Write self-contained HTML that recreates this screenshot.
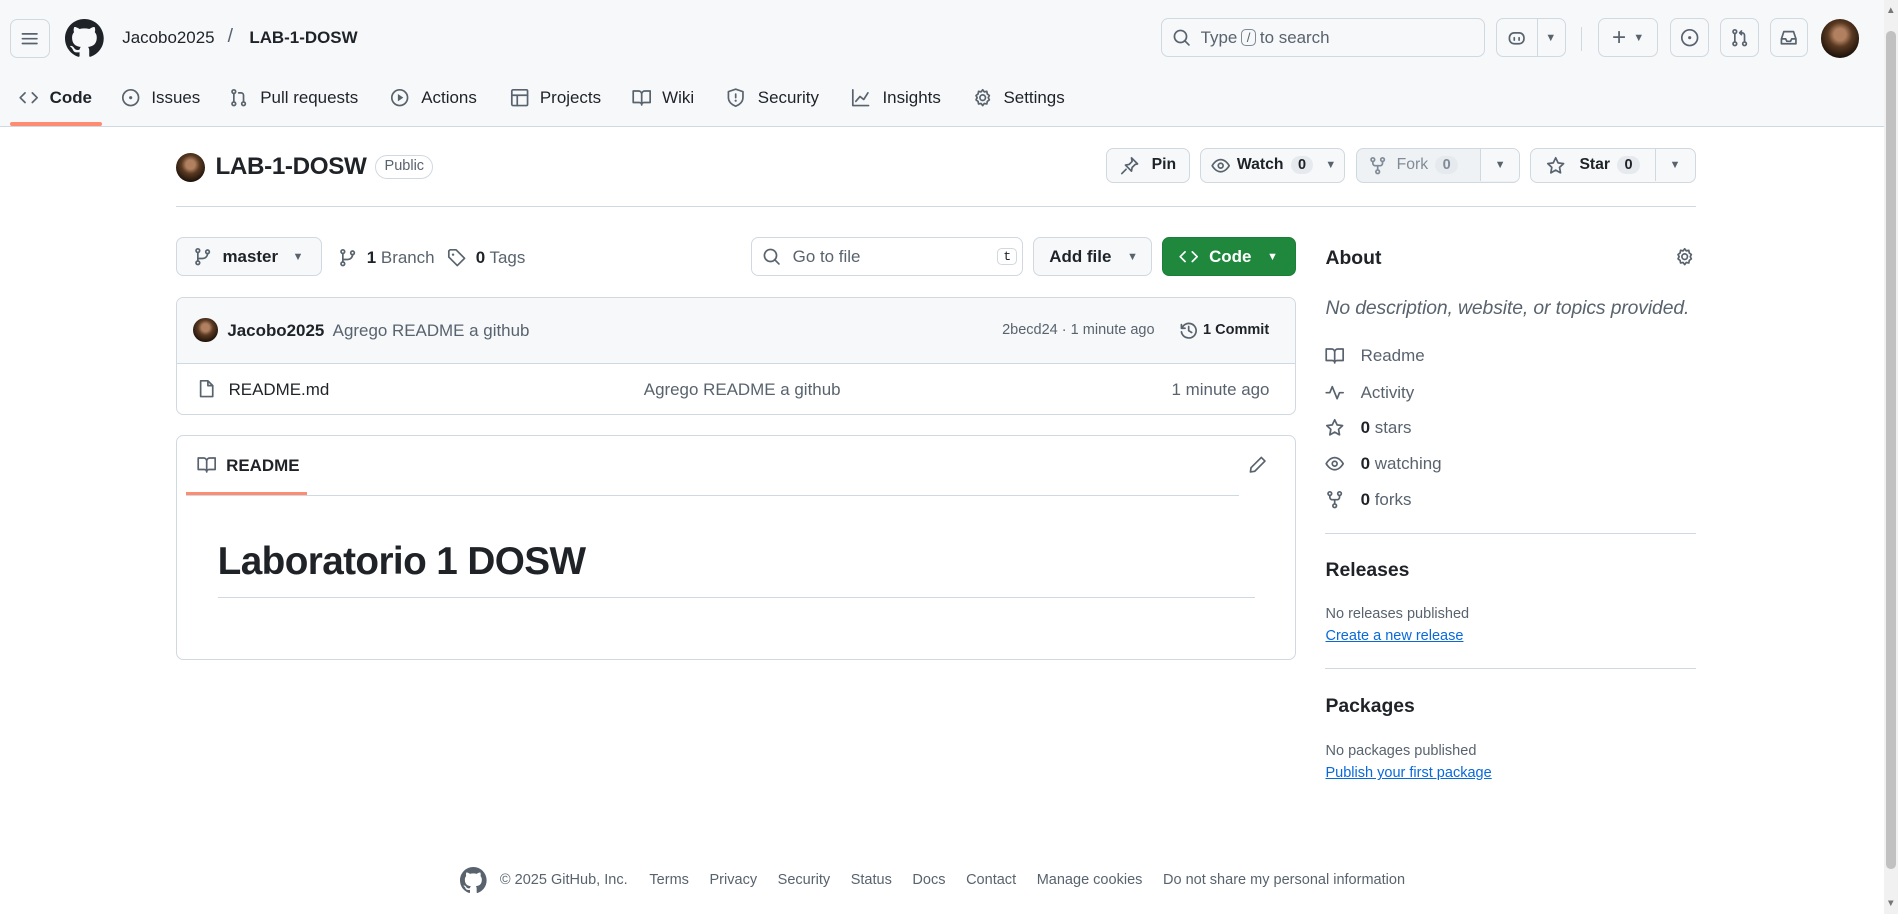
<!DOCTYPE html>
<html><head><meta charset="utf-8"><style>
*{box-sizing:border-box;margin:0;padding:0}
html,body{width:1898px;height:914px;overflow:hidden;background:#fff}
#w{zoom:1.2105;width:1568px;height:755px;position:relative;font-family:"Liberation Sans",sans-serif;color:#1f2328;font-size:14px}
.a{position:absolute}
.btn{position:absolute;border:1px solid #d1d9e0;border-radius:6px;background:#f6f8fa;display:flex;align-items:center;font-size:13px;font-weight:bold}
svg{display:block}
.ic{fill:none;stroke:#59636e;stroke-width:1.4;stroke-linecap:round;stroke-linejoin:round}
.cnt{background:#e6eaef;border-radius:10px;padding:1px 6px;font-size:12px;margin-left:6px}
.nav span{position:absolute;top:73px;font-size:14px}
.t{white-space:nowrap}
a{color:#0969da;text-decoration:underline}
</style></head><body><div id="w">
<!-- header -->
<div class="a" style="left:0;top:0;width:1556px;height:105px;background:#f6f8fa;border-bottom:1px solid #d1d9e0"></div>
<div class="btn" style="left:8px;top:16px;width:33px;height:32px;justify-content:center;background:#f6f8fa"><svg width="16" height="16"><path class="ic" d="M2 4h12M2 8h12M2 12h12"/></svg></div>
<svg class="a" style="left:54px;top:16px" width="32" height="32" viewBox="0 0 16 16"><path fill="#1f2328" d="M8 0C3.58 0 0 3.58 0 8c0 3.54 2.29 6.53 5.47 7.590.4.07.55-.17.55-.38 0-.19-.01-.82-.01-1.49-2.01.37-2.53-.49-2.69-.94-.09-.23-.48-.94-.82-1.13-.28-.15-.68-.52-.01-.53.63-.01 1.08.58 1.23.82.72 1.21 1.87.87 2.33.66.07-.52.28-.87.51-1.07-1.78-.2-3.64-.89-3.64-3.95 0-.87.31-1.59.82-2.15-.08-.2-.36-1.02.08-2.12 0 0 .67-.21 2.2.82.64-.18 1.32-.27 2-.27.68 0 1.36.09 2 .27 1.53-1.04 2.2-.82 2.2-.82.44 1.1.16 1.92.08 2.12.51.56.82 1.27.82 2.15 0 3.07-1.87 3.75-3.65 3.95.29.25.54.73.54 1.48 0 1.07-.01 1.93-.01 2.2 0 .21.15.46.55.38A8.013 8.013 0 0016 8c0-4.42-3.58-8-8-8z"/></svg>
<div class="a t" style="left:101px;top:23px">Jacobo2025</div>
<div class="a" style="left:188px;top:21px;color:#59636e;font-size:16px">/</div>
<div class="a t" style="left:206px;top:23px;font-weight:bold">LAB-1-DOSW</div>
<div class="a" style="left:959px;top:15px;width:268px;height:32px;border:1px solid #d1d9e0;border-radius:6px;display:flex;align-items:center;padding-left:8px;color:#59636e">
<svg width="16" height="16"><circle class="ic" cx="7" cy="7" r="5"/><path class="ic" d="M10.5 10.5L14 14"/></svg>
<span style="margin-left:8px">Type</span><span style="border:1px solid #818b98;border-radius:4px;font-size:11px;padding:0 4px;margin:0 3px">/</span><span>to search</span></div>
<div class="btn" style="left:1236px;top:15px;width:58px;height:32px;background:transparent"><svg style="margin-left:8px" width="16" height="16"><rect class="ic" x="2" y="4" width="12" height="9" rx="4"/><path class="ic" d="M6 8v2M10 8v2"/></svg><div style="border-left:1px solid #d1d9e0;height:30px;margin-left:9px"></div><span style="margin-left:6px;color:#59636e;font-size:9px">▼</span></div>
<div class="a" style="left:1306px;top:22px;width:1px;height:20px;background:#d1d9e0"></div>
<div class="btn" style="left:1320px;top:15px;width:50px;height:32px;background:transparent;justify-content:center;color:#59636e"><span style="font-size:20px;font-weight:normal">+</span><span style="font-size:9px;margin-left:6px">▼</span></div>
<div class="btn" style="left:1380px;top:15px;width:32px;height:32px;background:transparent;justify-content:center"><svg width="16" height="16"><circle class="ic" cx="8" cy="8" r="6.5"/><circle cx="8" cy="8" r="1.3" fill="#59636e"/></svg></div>
<div class="btn" style="left:1421px;top:15px;width:32px;height:32px;background:transparent;justify-content:center"><svg width="16" height="16"><circle class="ic" cx="4" cy="3" r="1.5"/><circle class="ic" cx="4" cy="13" r="1.5"/><circle class="ic" cx="12" cy="13" r="1.5"/><path class="ic" d="M4 4.5v7M12 11.5V6a2 2 0 00-2-2H8M9.5 2.5L8 4l1.5 1.5"/></svg></div>
<div class="btn" style="left:1462px;top:15px;width:32px;height:32px;background:transparent;justify-content:center"><svg width="16" height="16"><path class="ic" d="M2 9l2-6h8l2 6v4H2zM2 9h3.5l1 2h3l1-2H14"/></svg></div>
<div class="a" style="left:1504px;top:16px;width:32px;height:32px;border-radius:50%;background:radial-gradient(circle at 50% 40%,#b08060 0 20%,#5a3a22 40%,#1e120a 75%)"></div>
<!-- nav -->
<div class="nav">
<svg class="a" style="left:16px;top:73px" width="16" height="16"><path class="ic" d="M5 4L1 8l4 4M11 4l4 4-4 4"/></svg><span style="left:41px;font-weight:bold">Code</span>
<svg class="a" style="left:100px;top:73px" width="16" height="16"><circle class="ic" cx="8" cy="8" r="6.5"/><circle cx="8" cy="8" r="1.3" fill="#59636e"/></svg><span style="left:125px">Issues</span>
<svg class="a" style="left:189px;top:73px" width="16" height="16"><circle class="ic" cx="4" cy="3" r="1.5"/><circle class="ic" cx="4" cy="13" r="1.5"/><circle class="ic" cx="12" cy="13" r="1.5"/><path class="ic" d="M4 4.5v7M12 11.5V6a2 2 0 00-2-2H8"/></svg><span style="left:215px">Pull requests</span>
<svg class="a" style="left:322px;top:73px" width="16" height="16"><circle class="ic" cx="8" cy="8" r="6.5"/><path fill="#59636e" d="M6.5 5v6l4.5-3z"/></svg><span style="left:348px">Actions</span>
<svg class="a" style="left:421px;top:73px" width="16" height="16"><rect class="ic" x="1.5" y="1.5" width="13" height="13" rx="1"/><path class="ic" d="M1.5 6h13M6 6v8.5"/></svg><span style="left:446px">Projects</span>
<svg class="a" style="left:522px;top:73px" width="16" height="16"><path class="ic" d="M1 2.5h4.5A2.5 2.5 0 018 5v9a2 2 0 00-2-2H1zM15 2.5h-4.5A2.5 2.5 0 008 5v9a2 2 0 012-2h5z"/></svg><span style="left:547px">Wiki</span>
<svg class="a" style="left:600px;top:73px" width="16" height="16"><path class="ic" d="M8 1l6 2v5c0 3.5-3 6-6 7-3-1-6-3.5-6-7V3z M8 5v3"/><circle cx="8" cy="10.5" r=".9" fill="#59636e"/></svg><span style="left:626px">Security</span>
<svg class="a" style="left:703px;top:73px" width="16" height="16"><path class="ic" d="M1.5 1.5v13h13M4 11l3.5-4 3 2.5L14 4"/></svg><span style="left:729px">Insights</span>
<svg class="a" style="left:804px;top:73px" width="16" height="16"><circle class="ic" cx="8" cy="8" r="2.3"/><path class="ic" d="M8 1.5l1.3 1.7 2.1-.4.4 2.1 1.7 1.3L12.6 8l.9 1.8-1.7 1.3-.4 2.1-2.1-.4L8 14.5l-1.3-1.7-2.1.4-.4-2.1-1.7-1.3L3.4 8l-.9-1.8 1.7-1.3.4-2.1 2.1.4z"/></svg><span style="left:829px">Settings</span>
</div>
<div class="a" style="left:8px;top:101px;width:76px;height:3px;background:#fd8c73;border-radius:2px"></div>
<!-- title -->
<div class="a" style="left:145px;top:126px;width:24px;height:24px;border-radius:50%;background:radial-gradient(circle at 50% 40%,#b08060 0 20%,#5a3a22 40%,#1e120a 75%)"></div>
<div class="a t" style="left:178px;top:126px;font-size:20px;font-weight:bold;letter-spacing:-0.3px">LAB-1-DOSW</div>
<div class="a" style="left:310px;top:128px;width:48px;height:20px;border:1px solid #d1d9e0;border-radius:10px;font-size:12px;color:#59636e;text-align:center;line-height:18px">Public</div>
<div class="btn" style="left:914px;top:122px;width:69px;height:29px;justify-content:center"><svg width="16" height="16"><path class="ic" d="M9.5 1.5l5 5-2 .5-2.5 2.5-.5 3-5-5 3-.5L10 4.5zM5 11l-3.5 3.5"/></svg><span style="margin-left:10px">Pin</span></div>
<div class="btn" style="left:991px;top:122px;width:120px;height:29px;padding-left:9px"><svg width="16" height="16"><path class="ic" d="M1 8s2.5-5 7-5 7 5 7 5-2.5 5-7 5-7-5-7-5z"/><circle class="ic" cx="8" cy="8" r="2"/></svg><span style="margin-left:5px">Watch</span><span class="cnt">0</span><span style="margin-left:10px;font-size:9px;color:#59636e">▼</span></div>
<div class="btn" style="left:1120px;top:122px;width:136px;height:29px;padding-left:9px;background:#eff2f5;color:#818b98;overflow:hidden"><svg width="16" height="16"><circle class="ic" cx="4" cy="3" r="1.5" style="stroke:#818b98"/><circle class="ic" cx="12" cy="3" r="1.5" style="stroke:#818b98"/><circle class="ic" cx="8" cy="13" r="1.5" style="stroke:#818b98"/><path class="ic" style="stroke:#818b98" d="M4 4.5v1.5a2 2 0 002 2h4a2 2 0 002-2V4.5M8 8v3.5"/></svg><span style="margin-left:8px;font-weight:normal">Fork</span><span class="cnt">0</span><div style="position:absolute;left:102px;top:0;height:27px;border-left:1px solid #d1d9e0;background:#f6f8fa;width:32px;color:#59636e;font-size:9px;text-align:center;line-height:27px">▼</div></div>
<div class="btn" style="left:1264px;top:122px;width:137px;height:29px;padding-left:12px;overflow:hidden"><svg width="16" height="16"><path class="ic" d="M8 1.5l2 4.2 4.5.6-3.3 3.1.8 4.5L8 11.7l-4 2.2.8-4.5L1.5 6.3 6 5.7z"/></svg><span style="margin-left:12px">Star</span><span class="cnt">0</span><div style="position:absolute;left:102px;top:0;height:27px;border-left:1px solid #d1d9e0;width:33px;color:#59636e;font-size:9px;text-align:center;line-height:27px">▼</div></div>
<div class="a" style="left:145px;top:170px;width:1256px;height:1px;background:#d1d9e0"></div>
<!-- toolbar -->
<div class="btn" style="left:145px;top:196px;width:121px;height:32px;padding-left:14px"><svg width="16" height="16"><circle class="ic" cx="4" cy="3" r="1.5"/><circle class="ic" cx="4" cy="13" r="1.5"/><circle class="ic" cx="12" cy="4" r="1.5"/><path class="ic" d="M4 4.5v7M12 5.5a4 4 0 01-4 4H4"/></svg><span style="margin-left:8px;font-size:14px">master</span><span style="margin-left:12px;font-size:9px;color:#59636e">▼</span></div>
<svg class="a" style="left:279px;top:205px" width="16" height="16"><circle class="ic" cx="4" cy="3" r="1.5"/><circle class="ic" cx="4" cy="13" r="1.5"/><circle class="ic" cx="12" cy="4" r="1.5"/><path class="ic" d="M4 4.5v7M12 5.5a4 4 0 01-4 4H4"/></svg>
<div class="a t" style="left:303px;top:205px;color:#59636e"><b style="color:#1f2328">1</b> Branch</div>
<svg class="a" style="left:369px;top:205px" width="16" height="16"><path class="ic" d="M1.5 2.5v5l7 7 6-6-7-7h-5z"/><circle cx="5" cy="5.5" r="1" fill="#59636e"/></svg>
<div class="a t" style="left:393px;top:205px;color:#59636e"><b style="color:#1f2328">0</b> Tags</div>
<div class="a" style="left:620px;top:196px;width:225px;height:32px;border:1px solid #d1d9e0;border-radius:6px;display:flex;align-items:center;padding-left:9px;color:#59636e"><svg width="16" height="16"><circle class="ic" cx="7" cy="7" r="5"/><path class="ic" d="M10.5 10.5L14 14"/></svg><span style="margin-left:9px">Go to file</span><span style="position:absolute;right:4px;border:1px solid #d1d9e0;border-radius:4px;font-size:11px;padding:0 4px;font-family:'Liberation Mono',monospace;color:#1f2328">t</span></div>
<div class="btn" style="left:853px;top:196px;width:99px;height:32px;padding-left:13px;font-size:14px">Add file<span style="margin-left:13px;font-size:9px;color:#59636e">▼</span></div>
<div class="btn" style="left:960px;top:196px;width:111px;height:32px;background:#1f883d;border-color:#1a7f37;color:#fff;padding-left:13px;font-size:14px"><svg width="16" height="16"><path class="ic" style="stroke:#fff" d="M5 4L1 8l4 4M11 4l4 4-4 4"/></svg><span style="margin-left:9px">Code</span><span style="margin-left:13px;font-size:9px">▼</span></div>
<!-- file box -->
<div class="a" style="left:145px;top:245px;width:926px;height:98px;border:1px solid #d1d9e0;border-radius:6px;overflow:hidden">
<div style="height:55px;background:#f6f8fa;border-bottom:1px solid #d1d9e0;position:relative">
<div class="a" style="left:14px;top:17px;width:20px;height:20px;border-radius:50%;background:radial-gradient(circle at 50% 40%,#b08060 0 20%,#5a3a22 40%,#1e120a 75%)"></div>
<div class="a t" style="left:42px;top:19px"><b>Jacobo2025</b> <span style="color:#59636e;margin-left:3px">Agrego README a github</span></div>
<div class="a t" style="left:682px;top:20px;font-size:12px;color:#59636e">2becd24 · 1 minute ago</div>
<svg class="a" style="left:828px;top:19px" width="16" height="16"><path class="ic" d="M2 3v3h3"/><path class="ic" d="M2.5 6A6 6 0 118 14 6 6 0 012 9"/><path class="ic" d="M8 4.5V8l2.5 1.5"/></svg>
<div class="a t" style="left:848px;top:20px;font-size:12px;font-weight:bold">1 Commit</div>
</div>
<svg class="a" style="left:17px;top:67px" width="16" height="16"><path class="ic" d="M3 1.5h6l4 4v9H3zM9 1.5v4h4"/></svg>
<div class="a t" style="left:43px;top:68px">README.md</div>
<div class="a t" style="left:386px;top:68px;color:#59636e">Agrego README a github</div>
<div class="a t" style="left:822px;top:68px;color:#59636e">1 minute ago</div>
</div>
<!-- readme -->
<div class="a" style="left:145px;top:359px;width:926px;height:186px;border:1px solid #d1d9e0;border-radius:6px">
<svg class="a" style="left:17px;top:16px" width="16" height="16"><path class="ic" d="M1 2.5h4.5A2.5 2.5 0 018 5v9a2 2 0 00-2-2H1zM15 2.5h-4.5A2.5 2.5 0 008 5v9a2 2 0 012-2h5z"/></svg>
<div class="a" style="left:41px;top:17px;font-weight:bold">README</div>
<div class="a" style="left:8px;top:47px;width:100px;height:2px;background:#fd8c73"></div>
<div class="a" style="left:8px;top:49px;width:870px;height:1px;background:#d1d9e0"></div>
<svg class="a" style="left:885px;top:16px" width="16" height="16"><path class="ic" d="M11 2l3 3-8.5 8.5L2 14l.5-3.5z"/></svg>
<div class="a t" style="left:34px;top:86px;font-size:32px;font-weight:bold;letter-spacing:-0.5px">Laboratorio 1 DOSW</div>
<div class="a" style="left:34px;top:133px;width:857px;height:1px;background:#d1d9e0"></div>
</div>
<!-- sidebar -->
<div class="a" style="left:1095px;top:204px;font-size:16px;font-weight:bold">About</div>
<svg class="a" style="left:1384px;top:204px" width="16" height="16"><circle class="ic" cx="8" cy="8" r="2.3"/><path class="ic" d="M8 1.5l1.3 1.7 2.1-.4.4 2.1 1.7 1.3L12.6 8l.9 1.8-1.7 1.3-.4 2.1-2.1-.4L8 14.5l-1.3-1.7-2.1.4-.4-2.1-1.7-1.3L3.4 8l-.9-1.8 1.7-1.3.4-2.1 2.1.4z"/></svg>
<div class="a t" style="left:1095px;top:245px;font-size:16px;font-style:italic;color:#59636e;letter-spacing:-0.1px">No description, website, or topics provided.</div>
<svg class="a" style="left:1095px;top:286px" width="16" height="16"><path class="ic" d="M1 2.5h4.5A2.5 2.5 0 018 5v9a2 2 0 00-2-2H1zM15 2.5h-4.5A2.5 2.5 0 008 5v9a2 2 0 012-2h5z"/></svg>
<div class="a" style="left:1124px;top:286px;color:#59636e">Readme</div>
<svg class="a" style="left:1095px;top:316px" width="16" height="16"><path class="ic" d="M1 8h3l2-5 4 10 2-5h3"/></svg>
<div class="a" style="left:1124px;top:316px;color:#59636e">Activity</div>
<svg class="a" style="left:1095px;top:345px" width="16" height="16"><path class="ic" d="M8 1.5l2 4.2 4.5.6-3.3 3.1.8 4.5L8 11.7l-4 2.2.8-4.5L1.5 6.3 6 5.7z"/></svg>
<div class="a" style="left:1124px;top:345px;color:#59636e"><b style="color:#1f2328">0</b> stars</div>
<svg class="a" style="left:1095px;top:375px" width="16" height="16"><path class="ic" d="M1 8s2.5-5 7-5 7 5 7 5-2.5 5-7 5-7-5-7-5z"/><circle class="ic" cx="8" cy="8" r="2"/></svg>
<div class="a" style="left:1124px;top:375px;color:#59636e"><b style="color:#1f2328">0</b> watching</div>
<svg class="a" style="left:1095px;top:405px" width="16" height="16"><circle class="ic" cx="4" cy="3" r="1.5"/><circle class="ic" cx="12" cy="3" r="1.5"/><circle class="ic" cx="8" cy="13" r="1.5"/><path class="ic" d="M4 4.5v1.5a2 2 0 002 2h4a2 2 0 002-2V4.5M8 8v3.5"/></svg>
<div class="a" style="left:1124px;top:405px;color:#59636e"><b style="color:#1f2328">0</b> forks</div>
<div class="a" style="left:1095px;top:440px;width:306px;height:1px;background:#d1d9e0"></div>
<div class="a" style="left:1095px;top:462px;font-size:16px;font-weight:bold">Releases</div>
<div class="a" style="left:1095px;top:501px;font-size:12px;color:#59636e">No releases published</div>
<div class="a" style="left:1095px;top:519px;font-size:12px"><a>Create a new release</a></div>
<div class="a" style="left:1095px;top:552px;width:306px;height:1px;background:#d1d9e0"></div>
<div class="a" style="left:1095px;top:574px;font-size:16px;font-weight:bold">Packages</div>
<div class="a" style="left:1095px;top:614px;font-size:12px;color:#59636e">No packages published</div>
<div class="a" style="left:1095px;top:632px;font-size:12px"><a>Publish your first package</a></div>
<!-- footer -->
<svg class="a" style="left:380px;top:716px" width="22" height="22" viewBox="0 0 16 16"><path fill="#59636e" d="M8 0C3.58 0 0 3.58 0 8c0 3.54 2.29 6.53 5.47 7.59.4.07.55-.17.55-.38 0-.19-.01-.82-.01-1.49-2.01.37-2.53-.49-2.69-.94-.09-.23-.48-.94-.82-1.13-.28-.15-.68-.52-.01-.53.63-.01 1.08.58 1.23.82.72 1.21 1.87.87 2.33.66.07-.52.28-.87.51-1.07-1.78-.2-3.64-.89-3.64-3.95 0-.87.31-1.59.82-2.15-.08-.2-.36-1.02.08-2.12 0 0 .67-.21 2.2.82.64-.18 1.32-.27 2-.27.68 0 1.36.09 2 .27 1.53-1.04 2.2-.82 2.2-.82.44 1.1.16 1.92.08 2.12.51.56.82 1.27.82 2.15 0 3.07-1.87 3.75-3.65 3.95.29.25.54.73.54 1.48 0 1.07-.01 1.93-.01 2.2 0 .21.15.46.55.38A8.013 8.013 0 0016 8c0-4.42-3.58-8-8-8z"/></svg>
<div class="a t" style="left:413px;top:720px;font-size:12px;color:#59636e">© 2025 GitHub, Inc.<span style="margin-left:18px">Terms</span><span style="margin-left:17px">Privacy</span><span style="margin-left:17px">Security</span><span style="margin-left:17px">Status</span><span style="margin-left:17px">Docs</span><span style="margin-left:17px">Contact</span><span style="margin-left:17px">Manage cookies</span><span style="margin-left:17px">Do not share my personal information</span></div>
<!-- scrollbar -->
<div class="a" style="left:1556px;top:0;width:12px;height:755px;background:#f1f1f1"></div>
<div class="a" style="left:1558px;top:26px;width:8px;height:692px;background:#c1c1c1;border-radius:4px"></div>
<div class="a" style="left:1558px;top:4px;font-size:8px;color:#777">▲</div>
<div class="a" style="left:1558px;top:742px;font-size:8px;color:#777">▼</div>
</div></body></html>
